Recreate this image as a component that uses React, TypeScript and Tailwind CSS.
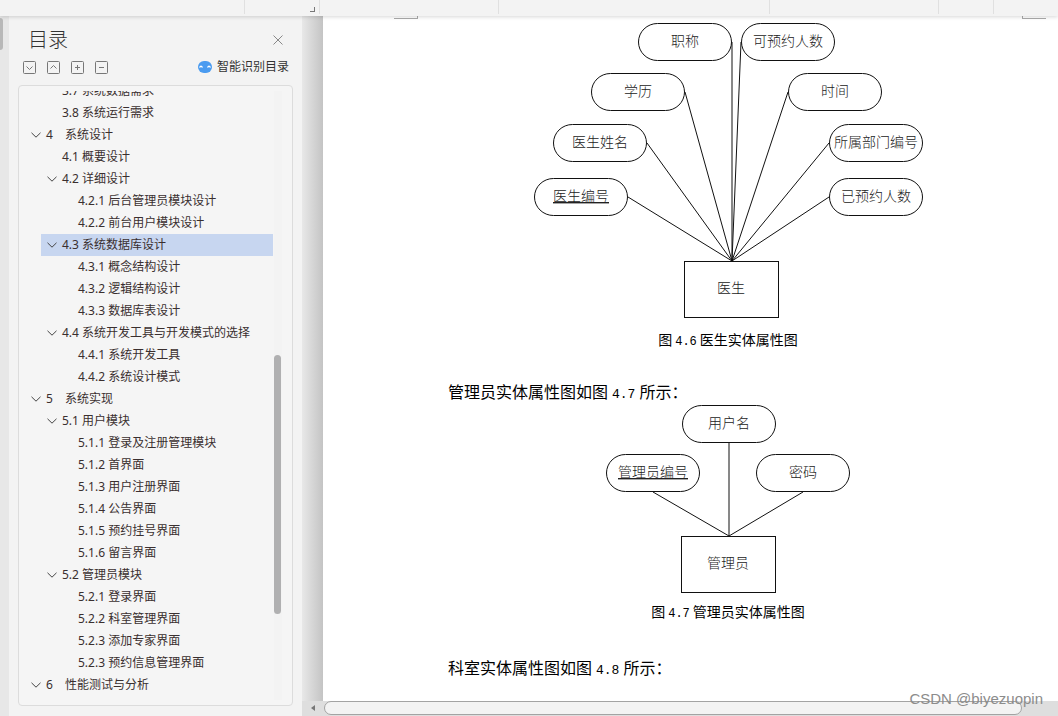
import React, { useState } from 'react';

interface TocItem {
  no: string;
  title: string;
  level: 1 | 2 | 3;
  hasChildren?: boolean;
}

interface DiagramNode {
  label: string;
  x: number;
  y: number;
  isKey?: boolean;
}

interface Diagram {
  name: string;
  width: number;
  height: number;
  nodes: DiagramNode[];
  // [x1, y1] of every line, all of them end at the entity anchor
  lines: [number, number][];
  anchor: [number, number];
}

const NODE_W = 94;
const NODE_H = 38;
const ENTITY_H = 57;

const TOC: TocItem[] = [
  { no: '3.7', title: '系统数据需求', level: 2 },
  { no: '3.8', title: '系统运行需求', level: 2 },
  { no: '4', title: '系统设计', level: 1, hasChildren: true },
  { no: '4.1', title: '概要设计', level: 2 },
  { no: '4.2', title: '详细设计', level: 2, hasChildren: true },
  { no: '4.2.1', title: '后台管理员模块设计', level: 3 },
  { no: '4.2.2', title: '前台用户模块设计', level: 3 },
  { no: '4.3', title: '系统数据库设计', level: 2, hasChildren: true },
  { no: '4.3.1', title: '概念结构设计', level: 3 },
  { no: '4.3.2', title: '逻辑结构设计', level: 3 },
  { no: '4.3.3', title: '数据库表设计', level: 3 },
  { no: '4.4', title: '系统开发工具与开发模式的选择', level: 2, hasChildren: true },
  { no: '4.4.1', title: '系统开发工具', level: 3 },
  { no: '4.4.2', title: '系统设计模式', level: 3 },
  { no: '5', title: '系统实现', level: 1, hasChildren: true },
  { no: '5.1', title: '用户模块', level: 2, hasChildren: true },
  { no: '5.1.1', title: '登录及注册管理模块', level: 3 },
  { no: '5.1.2', title: '首界面', level: 3 },
  { no: '5.1.3', title: '用户注册界面', level: 3 },
  { no: '5.1.4', title: '公告界面', level: 3 },
  { no: '5.1.5', title: '预约挂号界面', level: 3 },
  { no: '5.1.6', title: '留言界面', level: 3 },
  { no: '5.2', title: '管理员模块', level: 2, hasChildren: true },
  { no: '5.2.1', title: '登录界面', level: 3 },
  { no: '5.2.2', title: '科室管理界面', level: 3 },
  { no: '5.2.3', title: '添加专家界面', level: 3 },
  { no: '5.2.3', title: '预约信息管理界面', level: 3 },
  { no: '6', title: '性能测试与分析', level: 1, hasChildren: true },
];

const DOCTOR: Diagram = {
  name: '医生',
  width: 392,
  height: 300,
  nodes: [
    { label: '职称', x: 106, y: 3 },
    { label: '可预约人数', x: 209, y: 3 },
    { label: '学历', x: 59, y: 53 },
    { label: '时间', x: 256, y: 53 },
    { label: '医生姓名', x: 21, y: 104 },
    { label: '所属部门编号', x: 297, y: 104 },
    { label: '医生编号', x: 2, y: 158, isKey: true },
    { label: '已预约人数', x: 297, y: 158 },
  ],
  lines: [
    [200, 22],
    [209, 22],
    [153, 72],
    [256, 72],
    [115, 123],
    [297, 123],
    [96, 177],
    [297, 177],
  ],
  anchor: [200, 241],
};

const ADMIN: Diagram = {
  name: '管理员',
  width: 248,
  height: 188,
  nodes: [
    { label: '用户名', x: 78, y: 1 },
    { label: '管理员编号', x: 2, y: 50, isKey: true },
    { label: '密码', x: 152, y: 50 },
  ],
  lines: [
    [125, 39],
    [49, 88],
    [199, 88],
  ],
  anchor: [125, 132],
};

const INDENT = { 1: 'ml-0', 2: 'ml-4', 3: 'ml-8' };

const TOOLS = [
  { label: '展开', d: 'M3.500 5.500l3 3l3-3' },
  { label: '收起', d: 'M3.500 7.500l3-3l3 3' },
  { label: '增加级别', d: 'M4 6.5h5M6.5 4v5' },
  { label: '减少级别', d: 'M4 6.5h5' },
];

const RIBBON = ['w-[245px]', 'w-[75px]', 'w-[179px]', 'w-[271px]', 'w-[169px]', 'w-[55px]'];

const Ribbon: React.FC = () => (
  <header className="relative z-10 flex h-4 shrink-0 bg-[#f3f3f3] shadow-[0_1px_4px_rgba(0,0,0,0.16)]">
    {RIBBON.map((w, i) => (
      <div key={w} className={`${w} mb-0.5 flex shrink-0 items-end justify-end border-r border-[#e0e0e0] pr-1`}>
        {i === 1 && <span className="mb-0.5 h-[5px] w-[5px] border-r border-b border-[#777]" />}
      </div>
    ))}
  </header>
);

const Sidebar: React.FC = () => {
  const [selected, setSelected] = useState('4.3');

  return (
    <aside className="flex w-[293px] shrink-0 flex-col bg-[#f3f3f3] font-['Noto_Sans','Noto_Sans_CJK_SC',sans-serif]">
      <div className="flex items-center justify-between pt-[10px] pr-[18px] pl-[19px]">
        <h2 className="text-[20px] leading-7 font-light text-[#333]">目录</h2>
        <button aria-label="关闭" className="text-[#888]">
          <svg width="12" height="12" viewBox="0 0 12 12" fill="none" stroke="currentColor">
            <path d="M1.5 1.5l9 9M10.5 1.5l-9 9" />
          </svg>
        </button>
      </div>
      <div className="mt-1 flex h-[18px] items-center justify-between pr-[13px] pl-[14px]">
        <div className="flex gap-[11px]">
          {TOOLS.map((tool) => (
            <button key={tool.label} aria-label={tool.label} className="text-[#777]">
              <svg width="13" height="13" viewBox="0 0 13 13" fill="none" stroke="currentColor">
                <rect x="0.5" y="0.5" width="12" height="12" rx="1" />
                <path d={tool.d} />
              </svg>
            </button>
          ))}
        </div>
        <button className="flex items-center gap-[5px] text-[12px] leading-[18px] text-[#333]">
          <svg width="14" height="12" viewBox="0 0 14 12">
            <rect width="14" height="12" rx="6" fill="#4a9bf0" />
            <path d="M1.5 6.5q1.5-2.5 3 0M9.500 6.500q1.500-2.500 3 0" fill="none" stroke="#fff" strokeWidth="1.3" />
          </svg>
          智能识别目录
        </button>
      </div>
      <div className="mx-[9px] mt-[9px] mb-[10px] flex min-h-0 flex-1 rounded border border-[#dcdcdc] bg-[#f5f5f5] py-[5px] pr-[10px] pl-[6px]">
        <nav className="min-w-0 flex-1 overflow-hidden">
          {/* list is scrolled half a row down */}
          <ul className="-mt-[11px] text-[12px] text-[#3a2f2f]">
            {TOC.map((item, i) => (
              <li
                key={i}
                className={`${INDENT[item.level]} flex h-[22px] items-center ${
                  selected === item.no ? 'bg-[#c7d6f0]' : ''
                }`}
              >
                <span className="flex w-[21px] shrink-0 justify-center">
                  {item.hasChildren && (
                    <button aria-label={`折叠 ${item.title}`} className="text-[#444]">
                      <svg width="10" height="6" viewBox="0 0 10 6" fill="none" stroke="currentColor">
                        <path d="M0.500 0.800l4.500 4.400l4.500-4.400" />
                      </svg>
                    </button>
                  )}
                </span>
                <a
                  href={`#${item.no}`}
                  onClick={() => setSelected(item.no)}
                  className="flex min-w-0 flex-1 leading-[22px] whitespace-pre"
                >
                  {item.level === 1 ? (
                    <>
                      <span className="w-[19px]">{item.no}</span>
                      <span>{item.title}</span>
                    </>
                  ) : (
                    `${item.no} ${item.title}`
                  )}
                </a>
              </li>
            ))}
          </ul>
        </nav>
        <div className="ml-px w-2 bg-[#f3f3f3]">
          <div className="mt-[264px] h-[259px] w-[7px] rounded-full bg-[#b0b0b1]" />
        </div>
      </div>
    </aside>
  );
};

const EntityDiagram: React.FC<{ diagram: Diagram }> = ({ diagram }) => {
  const { name, width, height, nodes, lines, anchor } = diagram;
  const [ax, ay] = anchor;

  return (
    <svg
      role="img"
      aria-label={name}
      width={width}
      height={height}
      viewBox={`0 0 ${width} ${height}`}
      className="mx-auto block overflow-visible text-[14px] font-light"
      fill="none"
      stroke="#111"
    >
      {lines.map(([x, y]) => (
        <line key={`${x}-${y}`} x1={x} y1={y} x2={ax} y2={ay} />
      ))}
      {nodes.map((n) => (
        <g key={n.label}>
          <rect x={n.x + 0.5} y={n.y + 0.5} width={NODE_W - 1} height={NODE_H - 1} rx={NODE_H / 2} />
          <text
            x={n.x + NODE_W / 2}
            y={n.y + 23}
            textAnchor="middle"
            fill="#222"
            stroke="none"
            className={n.isKey ? 'underline underline-offset-2' : ''}
          >
            {n.label}
          </text>
        </g>
      ))}
      <rect x={ax - NODE_W / 2 - 0.5} y={ay + 0.5} width={NODE_W} height={ENTITY_H - 1} />
      <text x={ax - 1} y={ay + 32} textAnchor="middle" fill="#222" stroke="none">
        {name}
      </text>
    </svg>
  );
};

const Caption: React.FC<{ no: string; children: React.ReactNode }> = ({ no, children }) => (
  <figcaption className="mt-[7px] text-center text-[14px] leading-6">
    图<span className="mx-[3px] font-['Liberation_Mono',monospace] text-[12px] leading-none">{no}</span>
    {children}
  </figcaption>
);

const Lead: React.FC<{ no: string; children: React.ReactNode }> = ({ no, children }) => (
  <p className="pl-[30px] text-[16px] leading-6">
    {children}
    <span className="mx-1 font-['Liberation_Mono',monospace] text-[13px] leading-none">{no}</span>
    所示：
  </p>
);

const App: React.FC = () => {
  return (
    <div className="relative flex h-screen flex-col overflow-hidden bg-[#e7e7e7]">
      <Ribbon />
      <div className="flex min-h-0 flex-1">
        <div className="w-[9px] shrink-0 bg-[#e7e7e7] pt-0.5">
          <div className="h-8 w-[3px] rounded-r bg-[#b8b8b8]" />
        </div>
        <Sidebar />
        <div className="flex min-w-0 flex-1 flex-col">
          <div className="flex min-h-0 flex-1">
            <div className="w-[21px] shrink-0 bg-gradient-to-r from-[#e8e8e8] to-[#c4c4c4]" />
            <main className="min-w-0 flex-1 overflow-hidden bg-white font-['Noto_Sans_CJK_SC',sans-serif] text-black">
              {/* margin corner marks */}
              <div className="flex h-1 items-start justify-between pr-3 pl-[71px]">
                <span className="h-[3px] w-6 border-r border-b border-[#aaa]" />
                <span className="h-[3px] w-6 border-b border-l border-[#aaa]" />
              </div>
              <article className="pr-5 pl-[95px]">
                <figure className="mb-7">
                  <EntityDiagram diagram={DOCTOR} />
                  <Caption no="4.6">医生实体属性图</Caption>
                </figure>
                <Lead no="4.7">管理员实体属性图如图</Lead>
                <figure className="mt-px mb-8">
                  <EntityDiagram diagram={ADMIN} />
                  <Caption no="4.7">管理员实体属性图</Caption>
                </figure>
                <Lead no="4.8">科室实体属性图如图</Lead>
              </article>
            </main>
          </div>
          <div className="flex h-[15px] shrink-0 items-start bg-[#dedede]">
            <button aria-label="向左滚动" className="flex h-[14px] w-[22px] items-center justify-center">
              <svg width="4" height="6" viewBox="0 0 4 6" fill="#777">
                <path d="M4 0v6L0 3z" />
              </svg>
            </button>
            <div className="mr-9 h-[14px] flex-1 rounded-full border border-[#a3a3a3] bg-[#f3f3f3]" />
          </div>
        </div>
      </div>
      <span className="absolute right-[15px] bottom-2 font-['Liberation_Sans',sans-serif] text-[15px] leading-[18px] text-[#8c8c8c]">
        CSDN @biyezuopin
      </span>
    </div>
  );
};

export default App;
